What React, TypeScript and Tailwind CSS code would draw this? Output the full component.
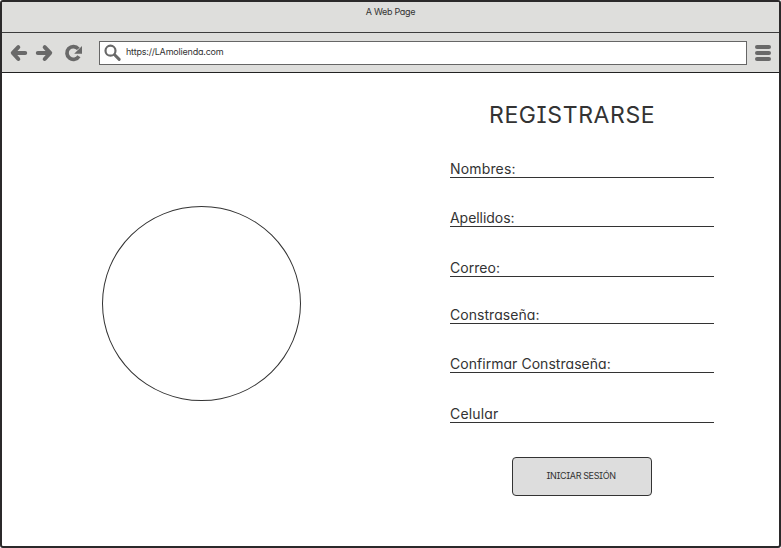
const fields = [
  { label: 'Nombres:', row: 'h-[31px]', text: 'tracking-[0.15px]' },
  { label: 'Apellidos:', row: 'h-[49px]', text: 'tracking-[-0.05px]' },
  { label: 'Correo:', row: 'h-[50px]', text: 'tracking-[0.05px]' },
  { label: 'Constraseña:', row: 'h-[47px]', text: 'tracking-[0.05px]' },
  { label: 'Confirmar Constraseña:', row: 'h-[49px]', text: 'tracking-[0.04px]' },
  { label: 'Celular', row: 'h-[50px]', text: 'tracking-[0.15px]' },
];

function NavIcons() {
  return (
    <svg width="86" height="38" viewBox="0 0 86 38" fill="none" stroke="#696969" strokeLinecap="round" strokeLinejoin="round">
      <path d="M16.3 14.2 10.8 20l5.5 6M11.8 20h11.4" strokeWidth="4" />
      <path d="M42.7 14.2 48.2 20l-5.5 6M47.2 20H35.8" strokeWidth="4" />
      <path d="M76.3 15.9a6.4 6.4 0 1 0 .6 7.3" strokeWidth="3.7" strokeLinecap="butt" />
      <path d="M80 13v7.8h-7.8z" fill="#696969" stroke="none" />
    </svg>
  );
}

export default function App() {
  return (
    <div className="flex h-[548px] w-[781px] flex-col overflow-hidden rounded-[3px] border-2 border-[#2b292a] bg-white font-['Inter','Liberation_Sans',sans-serif] text-[#333] [font-feature-settings:'cv11','cv08']">
      <header className="flex h-[31px] shrink-0 justify-center border-b border-[#3c3c3c] bg-[#dededc]">
        <span className="mt-[4px] text-[9px] leading-[12px] tracking-[-0.3px]">A Web Page</span>
      </header>
      <nav className="flex h-10 shrink-0 items-start border-b border-[#222] bg-[#dededc]">
        <NavIcons />
        <div className="mt-2 ml-[11px] flex h-6 w-[648px] items-start border border-[#666] bg-white">
          <svg className="ml-1 mt-[2px]" width="18" height="18" viewBox="0 0 18 18" fill="none" stroke="#696969">
            <circle cx="6.5" cy="6.7" r="5" strokeWidth="2.2" />
            <path d="m10.6 10.8 4.6 4.6" strokeWidth="3" strokeLinecap="round" />
          </svg>
          <span className="ml-1 mt-[4px] text-[9px] leading-[12px] tracking-[-0.2px]">https://LAmolienda.com</span>
        </div>
        <div className="mt-3 ml-2 flex flex-col gap-[2px]">
          <i className="h-1 w-4 rounded-full bg-[#696969]" />
          <i className="h-1 w-4 rounded-full bg-[#696969]" />
          <i className="h-1 w-4 rounded-full bg-[#696969]" />
        </div>
      </nav>
      <main className="flex min-h-0 flex-1">
        <div className="w-[448px] shrink-0 pl-[100px] pt-[133px]">
          <div className="h-[195px] w-[199px] rounded-[50%] border border-[#333]" />
        </div>
        <form className="flex w-[264px] flex-col">
          <h1 className="ml-[39px] mt-[27px] h-[47px] whitespace-nowrap text-[23px] leading-[30px] tracking-[0.6px]">REGISTRARSE</h1>
          {fields.map((f) => (
            <label key={f.label} className={`flex shrink-0 items-end border-b border-[#333] ${f.row}`}>
              <span className={`whitespace-nowrap text-[14px] leading-[16px] ${f.text}`}>{f.label}</span>
            </label>
          ))}
          <button type="button" className="ml-[62px] mt-[34px] flex h-[39px] w-[140px] shrink-0 items-center justify-center rounded-[4px] border border-[#333] bg-[#ddd] pr-[2px] pb-[2px] text-[9px] leading-[12px] tracking-[-0.38px]">
            INICIAR SESIÓN
          </button>
        </form>
      </main>
    </div>
  );
}
